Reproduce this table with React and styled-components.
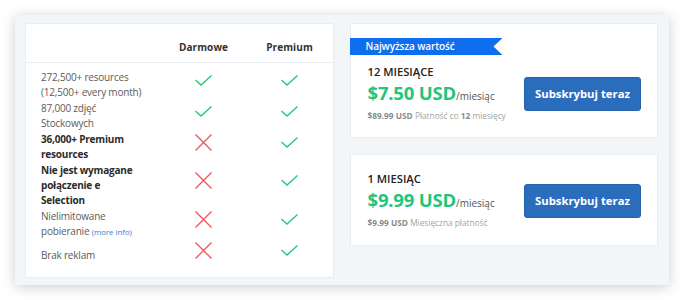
import React from "react"
import styled, { createGlobalStyle } from "styled-components"

const GlobalStyle = createGlobalStyle`
  body {
    margin: 0;
    background: #ffffff;
    font-family: "Open Sans", "Liberation Sans", sans-serif;
  }
`;

const Page = styled.div`
  padding: 15px 16px 16px 15px;
`;

const Panel = styled.div`
  display: grid;
  grid-template-columns: 1fr 1fr;
  gap: 16px;
  align-items: start;
  padding: 8px 11px 7px 10px;
  background: #f3f6f8;
  box-shadow: 0 2px 12px rgba(0, 0, 0, 0.2);
`;

const Card = styled.div`
  background: #ffffff;
  border: 1px solid #e7edf0;
  border-radius: 2px;
`;

const Table = styled(Card)`
  padding-bottom: 7px;
`;

const Row = styled.div`
  display: grid;
  grid-template-columns: 104px 1fr 86px 86px;
  align-items: center;
  padding-left: 15px;
  min-height: 30px;
`;

const HeadRow = styled(Row)`
  height: 38px;
  border-bottom: 1px solid #e8eef1;
  margin-bottom: 7px;
`;

const HeadLabel = styled.div`
  grid-column: ${p => p.col};
  text-align: center;
  font-size: 10px;
  font-weight: 700;
  letter-spacing: 0.1px;
  color: #333;
  padding-top: 7px;
`;

const Body = styled.div`
  display: flex;
  flex-direction: column;
  gap: 1px;
`;

const Feature = styled.div`
  font-size: 10px;
  line-height: 15px;
  letter-spacing: -0.2px;
  color: ${p => (p.bold ? "#2b2b2b" : "#5b5b5b")};
  font-weight: ${p => (p.bold ? 700 : 400)};
`;

const More = styled.span`
  color: #3a7bd5;
  font-size: 7.8px;
  line-height: 1;
  letter-spacing: 0;
`;

const Mark = styled.div`
  grid-column: ${p => p.col};
  display: flex;
  justify-content: center;
  margin-bottom: 10px;
`;

const Plans = styled.div`
  display: flex;
  flex-direction: column;
  gap: 16px;
`;

const Plan = styled(Card)`
  padding: ${p => (p.featured ? "14px 0 14px" : "16px 0 15px")};
`;

const Ribbon = styled.div`
  width: 153px;
  height: 17px;
  margin-left: -1px;
  margin-bottom: 9px;
  background: #0d6ef0;
  clip-path: polygon(0 0, 100% 0, calc(100% - 9px) 50%, 100% 100%, 0 100%);
  color: #fff;
  font-size: 10px;
  font-weight: 600;
  line-height: 17px;
  padding-left: 16px;
  box-sizing: border-box;
  letter-spacing: -0.1px;
`;

const PlanRow = styled.div`
  display: flex;
  align-items: center;
  justify-content: space-between;
  padding: 0 16px 0 17px;
`;

const Info = styled.div`
  display: flex;
  flex-direction: column;
`;

const Period = styled.div`
  font-size: 11.2px;
  font-weight: 600;
  line-height: 16px;
  color: #222;
`;

const Price = styled.div`
  display: flex;
  align-items: baseline;
  line-height: 26px;
`;

const Amount = styled.span`
  font-size: 18.5px;
  font-weight: 700;
  color: #1fc57a;
  letter-spacing: -0.2px;
`;

const Per = styled.span`
  font-size: 10px;
  color: #555;
`;

const Note = styled.div`
  font-size: 8.3px;
  line-height: 14px;
  color: #a3a3a3;

  b {
    color: #8a8a8a;
    font-weight: 700;
  }
`;

const Button = styled.button`
  width: 117px;
  height: 34px;
  border: 1px solid #2462aa;
  border-radius: 3px;
  background: #2b6dbd;
  color: #fff;
  font-family: inherit;
  font-size: 11.3px;
  font-weight: 700;
  cursor: pointer;
`;

const Check = () => (
  <svg width="17" height="11" viewBox="0 0 17 11">
    <path d="M0.5 5 L6 10 L16.5 0.6" fill="none" stroke="#20c77a" strokeWidth="1.3" />
  </svg>
);

const Cross = () => (
  <svg width="17" height="17" viewBox="0 0 17 17">
    <path d="M0.5 0.5 L16.5 16.5 M16.5 0.5 L0.5 16.5" fill="none" stroke="#f2575a" strokeWidth="1.4" />
  </svg>
);

const features = [
  { text: <>272,500+ resources<br />(12,500+ every month)</>, free: true },
  { text: <>87,000 zdjęć Stockowych</>, free: true },
  { text: <>36,000+ Premium resources</>, free: false, bold: true },
  { text: <>Nie jest wymagane połączenie e Selection</>, free: false, bold: true },
  { text: <>Nielimitowane pobieranie <More>(more info)</More></>, free: false },
  { text: <>Brak reklam</>, free: false },
];

export default function App() {
  return (
    <>
      <GlobalStyle />
      <Page>
        <Panel>
          <Table>
            <HeadRow>
              <HeadLabel col={3}>Darmowe</HeadLabel>
              <HeadLabel col={4}>Premium</HeadLabel>
            </HeadRow>
            <Body>
              {features.map((f, i) => (
                <Row key={i}>
                  <Feature bold={f.bold}>{f.text}</Feature>
                  <Mark col={3}>{f.free ? <Check /> : <Cross />}</Mark>
                  <Mark col={4}><Check /></Mark>
                </Row>
              ))}
            </Body>
          </Table>

          <Plans>
            <Plan featured>
              <Ribbon>Najwyższa wartość</Ribbon>
              <PlanRow>
                <Info>
                  <Period>12 MIESIĄCE</Period>
                  <Price>
                    <Amount>$7.50 USD</Amount>
                    <Per>/miesiąc</Per>
                  </Price>
                  <Note><b>$89.99 USD</b> Płatność co <b>12</b> miesięcy</Note>
                </Info>
                <Button>Subskrybuj teraz</Button>
              </PlanRow>
            </Plan>

            <Plan>
              <PlanRow>
                <Info>
                  <Period>1 MIESIĄC</Period>
                  <Price>
                    <Amount>$9.99 USD</Amount>
                    <Per>/miesiąc</Per>
                  </Price>
                  <Note><b>$9.99 USD</b> Miesięczna płatność</Note>
                </Info>
                <Button>Subskrybuj teraz</Button>
              </PlanRow>
            </Plan>
          </Plans>
        </Panel>
      </Page>
    </>
  )
}
